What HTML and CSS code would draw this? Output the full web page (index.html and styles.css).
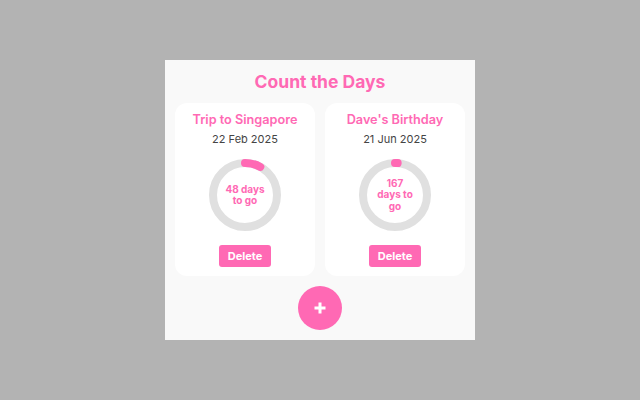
FILE: index.html
```html
<!DOCTYPE html>
<html>
<head>
<meta charset="utf-8">
<link rel="stylesheet" href="styles.css">
</head>
<body>
<div class="app">
  <h1 class="title">Count the Days</h1>
  <div class="cards">
    <div class="card">
      <div class="card-title">Trip to Singapore</div>
      <div class="card-date">22 Feb 2025</div>
      <div class="ring">
        <svg class="ring-svg" width="72" height="72" viewBox="0 0 72 72">
          <circle class="ring-track" cx="36" cy="36" r="32"/>
          <circle class="ring-bar" cx="36" cy="36" r="32" stroke-dasharray="16 300" transform="rotate(-90 36 36)"/>
        </svg>
        <div class="ring-text">48 days to go</div>
      </div>
      <button class="btn-delete">Delete</button>
    </div>
    <div class="card">
      <div class="card-title">Dave's Birthday</div>
      <div class="card-date">21 Jun 2025</div>
      <div class="ring">
        <svg class="ring-svg" width="72" height="72" viewBox="0 0 72 72">
          <circle class="ring-track" cx="36" cy="36" r="32"/>
          <circle class="ring-bar" cx="36" cy="36" r="32" stroke-dasharray="2.7 300" transform="rotate(-90 36 36)"/>
        </svg>
        <div class="ring-text">167 days to go</div>
      </div>
      <button class="btn-delete">Delete</button>
    </div>
  </div>
  <div class="add-row">
    <button class="btn-add" aria-label="Add">
      <svg width="12" height="12" viewBox="0 0 12 12"><path d="M6 0.5V11.5M0.5 6H11.5" stroke="#fff" stroke-width="3"/></svg>
    </button>
  </div>
</div>
</body>
</html>
```
FILE: styles.css
```css
html, body {
  margin: 0;
  padding: 0;
  background: #b3b3b3;
  font-family: Inter, "Liberation Sans", sans-serif;
}
.app {
  width: 310px;
  box-sizing: border-box;
  margin: 60px auto 0;
  padding: 10px;
  background: #f9f9f9;
  display: flex;
  flex-direction: column;
}
.title {
  margin: 0 0 9px;
  height: 24px;
  line-height: 24px;
  font-size: 17.5px;
  font-weight: 700;
  color: #ff69b4;
  text-align: center;
}
.cards {
  display: flex;
  gap: 10px;
}
.card {
  width: 140px;
  background: #fff;
  border-radius: 12px;
  padding: 9px 0 9px;
  display: flex;
  flex-direction: column;
  align-items: center;
}
.card-title {
  font-size: 12.7px;
  line-height: 16px;
  font-weight: 600;
  color: #ff69b4;
}
.card-date {
  margin-top: 4px;
  font-size: 11px;
  line-height: 14px;
  color: #444;
}
.ring {
  margin-top: 13px;
  width: 72px;
  height: 72px;
  display: grid;
  place-items: center;
}
.ring-svg, .ring-text {
  grid-area: 1 / 1;
}
.ring-track {
  fill: none;
  stroke: #e0e0e0;
  stroke-width: 8;
}
.ring-bar {
  fill: none;
  stroke: #ff69b4;
  stroke-width: 8;
  stroke-linecap: round;
}
.ring-text {
  width: 41px;
  text-align: center;
  font-size: 10px;
  line-height: 11.5px;
  font-weight: 700;
  color: #ff69b4;
}
.btn-delete {
  margin-top: 14px;
  width: 52px;
  height: 22px;
  border: none;
  border-radius: 3px;
  background: #ff69b4;
  color: #fff;
  font-family: Inter, "Liberation Sans", sans-serif;
  font-size: 11px;
  font-weight: 700;
  padding: 0;
}
.add-row {
  margin-top: 10px;
  display: flex;
  justify-content: center;
}
.btn-add {
  width: 44px;
  height: 44px;
  border-radius: 50%;
  border: none;
  background: #ff69b4;
  padding: 0;
  display: flex;
  align-items: center;
  justify-content: center;
}
```
